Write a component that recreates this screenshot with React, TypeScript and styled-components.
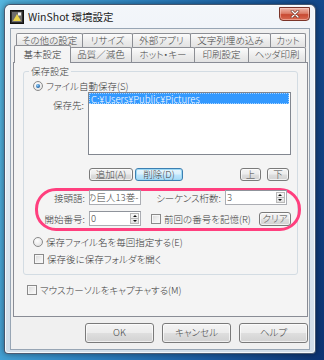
import React from 'react';
import styled, { createGlobalStyle, css } from 'styled-components';

const GlobalStyle = createGlobalStyle`
  html, body { margin: 0; padding: 0; }
  body {
    width: 324px;
    height: 360px;
    overflow: hidden;
    font-family: "Noto Sans CJK JP", "Noto Sans", sans-serif;
    font-size: 9.5px;
    font-weight: 300;
    font-feature-settings: "palt";
    color: #3a3a3a;
  }
`;

const Desktop = styled.div`
  width: 324px;
  height: 360px;
  box-sizing: border-box;
  padding: 4px 0 0 4px;
  background: linear-gradient(100deg, #55b6e0 0%, #2f86c4 35%, #1a5aa0 70%, #0c3372 100%);
`;

const Window = styled.div`
  width: 312px;
  height: 350px;
  box-sizing: border-box;
  border: 1px solid rgba(20, 40, 70, 0.75);
  border-radius: 6px 6px 4px 4px;
  background: linear-gradient(180deg, #f3f6fa 0%, #dfe8f1 55%, #d0dde9 100%);
  box-shadow: 0 0 6px rgba(0, 0, 0, 0.45), inset 0 0 0 1px rgba(255, 255, 255, 0.75);
  display: flex;
  flex-direction: column;
  padding: 0 5px 3px 5px;
`;

const TitleBar = styled.div`
  height: 23px;
  display: flex;
  align-items: center;
`;

const Title = styled.span`
  margin-left: 4px;
  font-size: 10.5px;
  font-weight: 400;
  color: #1c1c1c;
  font-feature-settings: normal;
`;

const CloseButton = styled.div`
  margin-left: auto;
  align-self: flex-start;
  margin-top: 2px;
  width: 31px;
  height: 14px;
  box-sizing: border-box;
  border: 1px solid #7a3428;
  border-radius: 0 0 4px 4px;
  background: linear-gradient(180deg, #efb8ab 0%, #dc7d68 45%, #c84a33 55%, #d86a52 100%);
  box-shadow: inset 0 0 0 1px rgba(255, 210, 200, 0.5);
  display: flex;
  align-items: center;
  justify-content: center;
`;

const Client = styled.div`
  flex: 1;
  border: 1px solid #97a5b4;
  background: #f0f0f0;
  padding: 4px 1px 0 2px;
  display: flex;
  flex-direction: column;
`;

const TabRow = styled.div<{ $offset: number }>`
  display: flex;
  height: ${p => (p.$offset === 3 ? 14 : 15)}px;
  padding-left: ${p => p.$offset}px;
  position: relative;
  z-index: 1;
`;

const Tab = styled.div<{ $w: number; $active?: boolean }>`
  width: ${p => p.$w}px;
  box-sizing: border-box;
  margin-right: -1px;
  border: 1px solid #8c8e94;
  border-bottom: none;
  border-radius: 2px 2px 0 0;
  background: linear-gradient(180deg, #fbfbfb 0%, #ececec 55%, #e2e2e2 100%);
  color: #444;
  display: flex;
  align-items: center;
  justify-content: center;
  line-height: 1;
  white-space: nowrap;
  ${p =>
    p.$active &&
    css`
      margin-top: -2px;
      height: 18px;
      background: #f4f4f4;
      position: relative;
      z-index: 2;
      color: #333;
    `}
`;

const Panel = styled.div`
  height: 255px;
  box-sizing: border-box;
  border: 1px solid #898c95;
  background: #f4f4f4;
  display: flex;
  flex-direction: column;
`;

const GroupBox = styled.div`
  position: relative;
  margin: 8px 9px 0 9px;
  border: 1px solid #d3dce3;
  border-radius: 3px;
  padding-bottom: 9px;
  display: flex;
  flex-direction: column;
`;

const Legend = styled.span`
  position: absolute;
  top: -7px;
  left: 5px;
  padding: 0 2px;
  line-height: 13px;
  background: #f4f4f4;
`;

const OptionRow = styled.div<{ $top: number; $left: number }>`
  height: 12px;
  margin-top: ${p => p.$top}px;
  padding-left: ${p => p.$left}px;
  display: flex;
  align-items: center;
  gap: 3px;
  white-space: nowrap;
`;

const Radio = styled.span<{ $on?: boolean }>`
  width: 10px;
  height: 10px;
  box-sizing: border-box;
  border-radius: 50%;
  border: 1px solid #8a8a8a;
  background: radial-gradient(circle at 40% 35%, #ffffff 0%, #e6e6e6 70%, #d2d2d2 100%);
  display: flex;
  align-items: center;
  justify-content: center;
  &::after {
    content: '';
    display: ${p => (p.$on ? 'block' : 'none')};
    width: 4px;
    height: 4px;
    border-radius: 50%;
    background: radial-gradient(circle at 40% 35%, #8fd0ff 0%, #2a6fb0 60%, #173f70 100%);
  }
`;

const Check = styled.span`
  width: 10px;
  height: 10px;
  box-sizing: border-box;
  border: 1px solid #8a8a8a;
  background: linear-gradient(135deg, #d8d8d8 0%, #ececec 50%, #fdfdfd 100%);
  box-shadow: inset 0 0 0 1px #f6f6f6;
  flex: none;
`;

const InlineCheck = styled(Check)`
  display: inline-block;
  vertical-align: -1px;
  margin-right: 3px;
`;

const ListRow = styled.div`
  display: flex;
  gap: 4px;
`;

const FieldLabel = styled.span<{ $w: number; $pad?: number }>`
  width: ${p => p.$w}px;
  flex: none;
  text-align: right;
  padding-top: ${p => p.$pad ?? 0}px;
  margin-right: ${p => (p.$pad ? 0 : 4)}px;
  line-height: 12px;
  white-space: nowrap;
`;

const ListBox = styled.div`
  width: 203px;
  height: 63px;
  box-sizing: border-box;
  border: 1px solid #828790;
  background: #ffffff;
  padding: 0 1px 0 0;
`;

const ListItem = styled.div<{ $selected?: boolean }>`
  height: 11px;
  line-height: 10px;
  padding-left: 1px;
  white-space: nowrap;
  font-feature-settings: normal;
  box-sizing: border-box;
  ${p =>
    p.$selected &&
    css`
      background: #3399ff;
      color: #ffffff;
      border: 1px dotted #a8d4ff;
    `}
`;

const ButtonRow = styled.div`
  display: flex;
  gap: 2px;
  margin-top: 13px;
  padding-left: 65px;
  padding-right: 8px;
`;

const Button = styled.button<{ $w: number; $h?: number; $default?: boolean }>`
  width: ${p => p.$w}px;
  height: ${p => p.$h ?? 13}px;
  box-sizing: border-box;
  padding: 0;
  font: inherit;
  line-height: 1;
  color: #444;
  border: 1px solid #7a7a7a;
  border-radius: 3px;
  background: linear-gradient(180deg, #f4f4f4 0%, #ececec 48%, #dedede 52%, #d2d2d2 100%);
  box-shadow: inset 0 0 0 1px rgba(255, 255, 255, 0.65);
  white-space: nowrap;
  flex: none;
  ${p =>
    p.$default &&
    css`
      border-color: #3c7fb1;
      background: linear-gradient(180deg, #eaf6fd 0%, #d9f0fc 48%, #bee6fd 52%, #a7d9f5 100%);
      box-shadow: inset 0 0 0 1px #9cd8f5;
    `}
`;

const Spacer = styled.span`
  flex: 1;
`;

const PairGap = styled.span`
  width: 2px;
`;

const Highlight = styled.div`
  margin: 7px -4px 0 11px;
  height: 43px;
  box-sizing: border-box;
  border: 3px solid #ff3f7e;
  border-radius: 21px;
  padding: 0 7px 0 0;
  display: flex;
  flex-direction: column;
  gap: 6px;
`;

const FormRow = styled.div<{ $top?: number }>`
  display: flex;
  align-items: center;
  height: 15px;
  margin-top: ${p => p.$top ?? 0}px;
  white-space: nowrap;
`;

const TextBox = styled.div<{ $w: number }>`
  width: ${p => p.$w}px;
  height: 15px;
  box-sizing: border-box;
  border: 1px solid #abadb3;
  border-top-color: #8f939b;
  background: #ffffff;
  display: flex;
  align-items: center;
  overflow: hidden;
  padding-left: 1px;
  flex: none;
`;

const Value = styled.span<{ $shift?: number }>`
  flex: 1;
  margin-left: ${p => p.$shift ?? 0}px;
  line-height: 1;
  white-space: nowrap;
  color: #444;
  font-feature-settings: normal;
`;

const Spinner = styled.span`
  width: 9px;
  height: 11px;
  margin-right: 1px;
  box-sizing: border-box;
  border: 1px solid #b9b9b9;
  background: linear-gradient(180deg, #f7f7f7, #e3e3e3);
  display: flex;
  flex-direction: column;
  flex: none;
`;

const SpinHalf = styled.span<{ $down?: boolean }>`
  flex: 1;
  display: flex;
  align-items: center;
  justify-content: center;
  ${p => p.$down && 'border-top: 1px solid #b9b9b9;'}
  &::after {
    content: '';
    border-left: 2px solid transparent;
    border-right: 2px solid transparent;
    ${p => (p.$down ? 'border-top: 2px solid #111;' : 'border-bottom: 2px solid #111;')}
  }
`;

const InlineLabel = styled.span<{ $left: number }>`
  margin-left: ${p => p.$left}px;
  margin-right: 4px;
`;

const FooterButtons = styled.div`
  display: flex;
  justify-content: flex-end;
  gap: 8px;
  margin-top: 6px;
`;

const AppIcon = () => (
  <svg width="14" height="14" viewBox="0 0 14 14">
    <rect x="0.5" y="0.5" width="13" height="13" fill="#2b2b2b" stroke="#111" />
    <rect x="2" y="2" width="10" height="10" fill="#6d6d6d" />
    <path d="M3 11 L7 4 L11 11 Z" fill="#e9d34a" />
    <rect x="8" y="2.5" width="3" height="3" fill="#f5f5f5" />
  </svg>
);

const CloseGlyph = () => (
  <svg width="10" height="8" viewBox="0 0 10 8">
    <path d="M2 1 L8 7 M8 1 L2 7" stroke="#6a2a1f" strokeWidth="2.6" strokeLinecap="round" />
    <path d="M2 1 L8 7 M8 1 L2 7" stroke="#ffffff" strokeWidth="1.4" strokeLinecap="round" />
  </svg>
);

const backTabs: [string, number][] = [
  ['その他の設定', 67],
  ['リサイズ', 51],
  ['外部アプリ', 59],
  ['文字列埋め込み', 81],
  ['カット', 36],
];

const frontTabs: [string, number, boolean][] = [
  ['基本設定', 57, true],
  ['品質／減色', 62, false],
  ['ホット・キー', 64, false],
  ['印刷設定', 55, false],
  ['ヘッダ印刷', 58, false],
];

const SpinBox = ({ w, value }: { w: number; value: string }) => (
  <TextBox $w={w}>
    <Value>{value}</Value>
    <Spinner>
      <SpinHalf />
      <SpinHalf $down />
    </Spinner>
  </TextBox>
);

const App = () => (
  <>
    <GlobalStyle />
    <Desktop>
      <Window>
        <TitleBar>
          <AppIcon />
          <Title>WinShot 環境設定</Title>
          <CloseButton>
            <CloseGlyph />
          </CloseButton>
        </TitleBar>
        <Client>
          <TabRow $offset={3}>
            {backTabs.map(([label, w]) => (
              <Tab key={label} $w={w}>{label}</Tab>
            ))}
          </TabRow>
          <TabRow $offset={1}>
            {frontTabs.map(([label, w, active]) => (
              <Tab key={label} $w={w} $active={active}>{label}</Tab>
            ))}
          </TabRow>
          <Panel>
            <GroupBox>
              <Legend>保存設定</Legend>
              <OptionRow $top={8} $left={9}>
                <Radio $on />
                ファイル自動保存(S)
              </OptionRow>
              <ListRow>
                <FieldLabel $w={60} $pad={7}>保存先:</FieldLabel>
                <ListBox>
                  <ListItem $selected>C:¥Users¥Public¥Pictures</ListItem>
                </ListBox>
              </ListRow>
              <ButtonRow>
                <Button $w={44}>追加(A)</Button>
                <Button $w={48} $default>削除(D)</Button>
                <Spacer />
                <Button $w={21}>上</Button>
                <PairGap />
                <Button $w={22}>下</Button>
              </ButtonRow>
              <Highlight>
                <FormRow $top={-1}>
                  <FieldLabel $w={47}>接頭語:</FieldLabel>
                  <TextBox $w={52}>
                    <Value $shift={-4}>の巨人13巻-</Value>
                  </TextBox>
                  <InlineLabel $left={15}>シーケンス桁数:</InlineLabel>
                  <SpinBox w={62} value="3" />
                </FormRow>
                <FormRow>
                  <FieldLabel $w={47}>開始番号:</FieldLabel>
                  <SpinBox w={52} value="0" />
                  <InlineLabel $left={10}>
                    <InlineCheck />
                    前回の番号を記憶(R)
                  </InlineLabel>
                  <Spacer />
                  <Button $w={32} $h={14}>クリア</Button>
                </FormRow>
              </Highlight>
              <OptionRow $top={5} $left={9}>
                <Radio />
                保存ファイル名を毎回指定する(E)
              </OptionRow>
              <OptionRow $top={5} $left={10}>
                <Check />
                保存後に保存フォルダを開く
              </OptionRow>
            </GroupBox>
            <OptionRow $top={9} $left={13}>
              <Check />
              マウスカーソルをキャプチャする(M)
            </OptionRow>
          </Panel>
          <FooterButtons>
            <Button $w={69} $h={20}>OK</Button>
            <Button $w={69} $h={20}>キャンセル</Button>
            <Button $w={69} $h={20}>ヘルプ</Button>
          </FooterButtons>
        </Client>
      </Window>
    </Desktop>
  </>
);

export default App;
